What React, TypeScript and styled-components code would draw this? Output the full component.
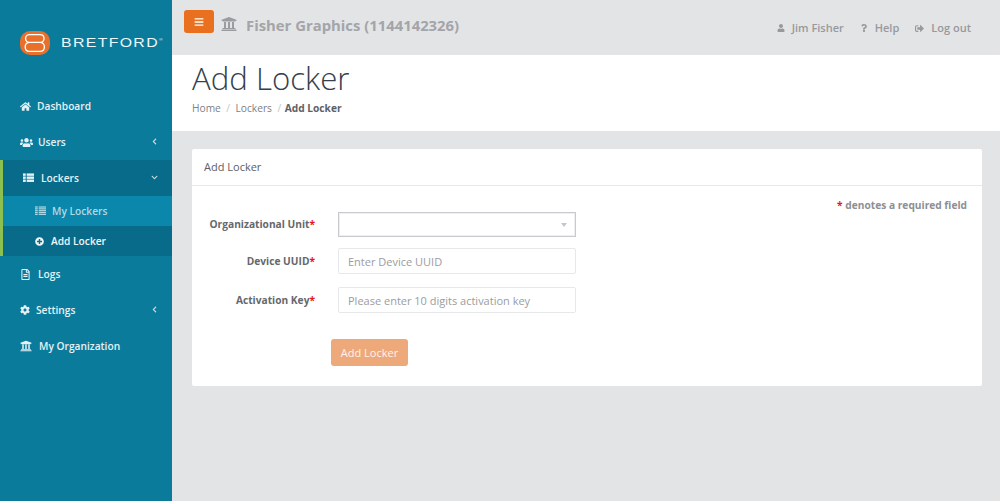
import { ReactNode } from "react";
import {
  FaBars,
  FaChevronDown,
  FaChevronLeft,
  FaCog,
  FaHome,
  FaPlusCircle,
  FaQuestion,
  FaRegFileAlt,
  FaSignOutAlt,
  FaUniversity,
  FaUser,
  FaUsers,
} from "react-icons/fa";
import styled, { createGlobalStyle } from "styled-components";

const GlobalStyle = createGlobalStyle`
  html, body {
    margin: 0;
    padding: 0;
    height: 100%;
    background: #e3e4e6;
    font-family: "Open Sans", "Liberation Sans", sans-serif;
  }
  * {
    box-sizing: border-box;
  }
`;

const Logo = () => (
  <LogoRow>
    <svg width="30" height="24" viewBox="0 0 30 24">
      <rect x="0" y="0" width="30" height="24" rx="10" fill="#e8702a" />
      <path
        d="M9.5 3.6 H20 C22.6 3.6 24 5.2 24 7.4 C24 9.4 22.6 11 20.6 11.4 C22.8 11.8 24.4 13.4 24.4 15.8 C24.4 18.6 22.6 20.4 20 20.4 H9.5 C6.8 20.4 5.2 18.6 5.2 15.8 C5.2 13.4 6.8 11.8 9 11.4 C7 11 5.6 9.4 5.6 7.4 C5.6 5.2 7 3.6 9.5 3.6 Z M9 11.4 H20.6"
        fill="none"
        stroke="#fff"
        strokeWidth="1.3"
      />
    </svg>
    <LogoText>
      BRETFORD<sup>®</sup>
    </LogoText>
  </LogoRow>
);

// no package has the two-column list from the reference, so it's drawn here
const ListIcon = ({ lines, width }: { lines: number; width: number }) => {
  const rows = Array.from({ length: lines }, (_, i) => i);
  const step = 10 / lines;
  return (
    <svg width={width} height="10" viewBox="0 0 12 10" fill="currentColor">
      {rows.map((i) => (
        <g key={i}>
          <rect x="0" y={i * step} width="3" height={step - 0.7} />
          <rect x="4" y={i * step} width="8" height={step - 0.7} />
        </g>
      ))}
    </svg>
  );
};

type NavProps = {
  icon: ReactNode;
  label: string;
  arrow?: ReactNode;
  gap?: number;
};

const NavItem = ({ icon, label, arrow, gap = 8 }: NavProps) => (
  <NavRow $gap={gap}>
    {icon}
    <span>{label}</span>
    {arrow && <Arrow>{arrow}</Arrow>}
  </NavRow>
);

export default function App() {
  return (
    <>
      <GlobalStyle />
      <Page>
        <Sidebar>
          <Logo />
          <Nav>
            <NavItem icon={<FaHome size={11} />} label="Dashboard" gap={6} />
            <NavItem icon={<FaUsers size={13} />} label="Users" arrow={<FaChevronLeft size={7} />} gap={5} />
            <OpenGroup>
              <LockersRow>
                <ListIcon lines={3} width={11} />
                <span>Lockers</span>
                <Arrow>
                  <FaChevronDown size={7} />
                </Arrow>
              </LockersRow>
              <SubRow $active>
                <ListIcon lines={5} width={11} />
                <span>My Lockers</span>
              </SubRow>
              <SubRow>
                <FaPlusCircle size={9} />
                <span>Add Locker</span>
              </SubRow>
            </OpenGroup>
            <NavItem icon={<FaRegFileAlt size={11} />} label="Logs" gap={7} />
            <NavItem icon={<FaCog size={10} />} label="Settings" arrow={<FaChevronLeft size={7} />} gap={6} />
            <NavItem icon={<FaUniversity size={12} />} label="My Organization" gap={7} />
          </Nav>
        </Sidebar>
        <Main>
          <TopBar>
            <MenuButton>
              <FaBars size={10} />
            </MenuButton>
            <OrgIcon>
              <FaUniversity size={16} />
            </OrgIcon>
            <OrgName>Fisher Graphics (1144142326)</OrgName>
            <TopLinks>
              <TopLink>
                <FaUser size={8} />
                Jim Fisher
              </TopLink>
              <TopLink>
                <FaQuestion size={8} />
                Help
              </TopLink>
              <TopLink>
                <FaSignOutAlt size={9} />
                Log out
              </TopLink>
            </TopLinks>
          </TopBar>
          <PageHeader>
            <Title>Add Locker</Title>
            <Crumbs>
              <span>Home</span>
              <Slash>/</Slash>
              <span>Lockers</span>
              <Slash>/</Slash>
              <strong>Add Locker</strong>
            </Crumbs>
          </PageHeader>
          <Content>
            <Card>
              <CardHead>Add Locker</CardHead>
              <CardBody>
                <Note>
                  <Star>*</Star> denotes a required field
                </Note>
                <FieldRow $height={25} $bottom={11}>
                  <FieldLabel>
                    Organizational Unit<Star>*</Star>
                  </FieldLabel>
                  <SelectBox>
                    <Caret />
                  </SelectBox>
                </FieldRow>
                <FieldRow $height={26} $bottom={13}>
                  <FieldLabel>
                    Device UUID<Star>*</Star>
                  </FieldLabel>
                  <TextInput placeholder="Enter Device UUID" />
                </FieldRow>
                <FieldRow $height={26} $bottom={26}>
                  <FieldLabel>
                    Activation Key<Star>*</Star>
                  </FieldLabel>
                  <TextInput placeholder="Please enter 10 digits activation key" />
                </FieldRow>
                <SubmitButton>Add Locker</SubmitButton>
              </CardBody>
            </Card>
          </Content>
        </Main>
      </Page>
    </>
  );
}

const Page = styled.div`
  display: flex;
  width: 1000px;
  height: 501px;
  overflow: hidden;
`;

const Sidebar = styled.aside`
  width: 172px;
  flex: none;
  background: #0b7b9c;
  color: #e6f1f5;
`;

const LogoRow = styled.div`
  display: flex;
  align-items: center;
  gap: 11px;
  height: 88px;
  padding: 0 0 3px 20px;
`;

const LogoText = styled.div`
  font-family: "Liberation Sans", Arial, sans-serif;
  font-size: 13px;
  letter-spacing: 1.1px;
  color: #eef6f8;
  white-space: nowrap;
  transform: scaleX(1.22);
  transform-origin: left center;

  sup {
    font-size: 4px;
    letter-spacing: 0;
    vertical-align: 6px;
    line-height: 0;
  }
`;

const Nav = styled.nav`
  display: flex;
  flex-direction: column;
`;

const NavRow = styled.div<{ $gap: number }>`
  display: flex;
  align-items: center;
  gap: ${(p) => p.$gap}px;
  height: 36px;
  padding: 0 14px 0 20px;
  font-size: 10.2px;
  font-weight: 600;
  color: #e6f1f5;

  span {
    margin-top: -1px;
  }
`;

const Arrow = styled.span`
  display: flex;
  margin-left: auto;
  opacity: 0.85;
`;

const OpenGroup = styled.div`
  border-left: 3px solid #8cc152;
`;

const LockersRow = styled.div`
  display: flex;
  align-items: center;
  gap: 7px;
  height: 36px;
  padding: 0 14px 0 20px;
  background: #096b8a;
  font-size: 10.2px;
  font-weight: 600;

  span {
    margin-top: -1px;
  }
`;

const SubRow = styled.div<{ $active?: boolean }>`
  display: flex;
  align-items: center;
  gap: ${(p) => (p.$active ? 6 : 7)}px;
  height: 30px;
  padding-left: 32px;
  background: ${(p) => (p.$active ? "#0a87aa" : "#096b8a")};
  color: ${(p) => (p.$active ? "#b3d8e4" : "#eef6f8")};
  font-size: 10.2px;
  font-weight: 600;

  span {
    margin-top: -1px;
  }
`;

const Main = styled.main`
  flex: 1;
  min-width: 0;
  display: flex;
  flex-direction: column;
`;

const TopBar = styled.header`
  display: flex;
  align-items: flex-start;
  height: 55px;
  padding: 10px 0 0 12px;
  background: #e3e4e6;
  color: #97999d;
`;

const MenuButton = styled.button`
  display: flex;
  align-items: center;
  justify-content: center;
  width: 30px;
  height: 23px;
  padding: 0;
  border: none;
  border-radius: 3px;
  background: #e8701f;
  color: #fff;
`;

const OrgIcon = styled.span`
  display: flex;
  margin: 6px 0 0 7px;
  color: #9a9c9f;
`;

const OrgName = styled.div`
  margin: 5px 0 0 9px;
  font-size: 14.85px;
  line-height: 20px;
  font-weight: 700;
  color: #a3a5a9;
  white-space: nowrap;
`;

const TopLinks = styled.div`
  display: flex;
  gap: 16px;
  margin-left: auto;
  padding: 9px 29px 0 0;
`;

const TopLink = styled.div`
  display: flex;
  align-items: center;
  gap: 7px;
  font-size: 11px;
  line-height: 18px;
  font-weight: 600;
  color: #97999d;
`;

const PageHeader = styled.section`
  height: 76px;
  padding: 3px 20px 0;
  background: #fff;
`;

const Title = styled.h1`
  margin: 0;
  font-size: 31.2px;
  line-height: 40px;
  font-weight: 300;
  color: #34404d;
`;

const Crumbs = styled.div`
  display: flex;
  gap: 5.5px;
  margin-top: 1px;
  font-size: 10.2px;
  line-height: 18px;
  color: #7d8085;

  strong {
    margin-left: -2px;
    font-weight: 700;
    color: #5e6166;
  }
`;

const Slash = styled.span`
  color: #c4c6c9;
`;

const Content = styled.section`
  flex: 1;
  padding: 18px 18px 0 20px;
  background: #e3e4e6;
`;

const Card = styled.div`
  height: 237px;
  border-radius: 2px;
  background: #fff;
`;

const CardHead = styled.div`
  height: 37px;
  padding: 0 12px;
  border-bottom: 1px solid #e7e8ea;
  font-size: 11px;
  font-weight: 400;
  line-height: 36px;
  color: #5d6064;
`;

const CardBody = styled.div`
  position: relative;
  padding: 26px 15px 0 0;
`;

const Note = styled.div`
  position: absolute;
  top: 11px;
  right: 15px;
  font-size: 10.2px;
  line-height: 16px;
  font-weight: 700;
  color: #8d8f93;
`;

const Star = styled.span`
  color: #e8141c;
  font-weight: 700;
`;

const FieldRow = styled.div<{ $height: number; $bottom: number }>`
  display: flex;
  align-items: center;
  height: ${(p) => p.$height}px;
  margin-bottom: ${(p) => p.$bottom}px;
`;

const FieldLabel = styled.label`
  width: 123px;
  margin-right: 23px;
  padding-bottom: 1px;
  text-align: right;
  white-space: nowrap;
  font-size: 10.2px;
  font-weight: 700;
  color: #65686d;
`;

const SelectBox = styled.div`
  position: relative;
  width: 238px;
  height: 25px;
  border: 1px solid #c8cacd;
  box-shadow: inset 0 0 0 1px #eeeff0;
  background: #fff;
`;

const Caret = styled.span`
  position: absolute;
  top: 10px;
  right: 8px;
  border-style: solid;
  border-width: 4px 3px 0;
  border-color: #c4c6c9 transparent transparent;
`;

const TextInput = styled.input`
  width: 238px;
  height: 26px;
  padding: 0 9px;
  border: 1px solid #e7e8ea;
  border-radius: 2px;
  outline: none;
  background: #fff;
  font-family: inherit;
  font-size: 11px;

  &::placeholder {
    color: #9a9c9f;
    opacity: 1;
  }
`;

const SubmitButton = styled.button`
  display: block;
  width: 77px;
  height: 27px;
  margin-left: 139px;
  padding: 0;
  border: none;
  border-radius: 3px;
  background: #eea97a;
  color: #fdf3ec;
  font-family: inherit;
  font-size: 11px;
  font-weight: 400;
`;
